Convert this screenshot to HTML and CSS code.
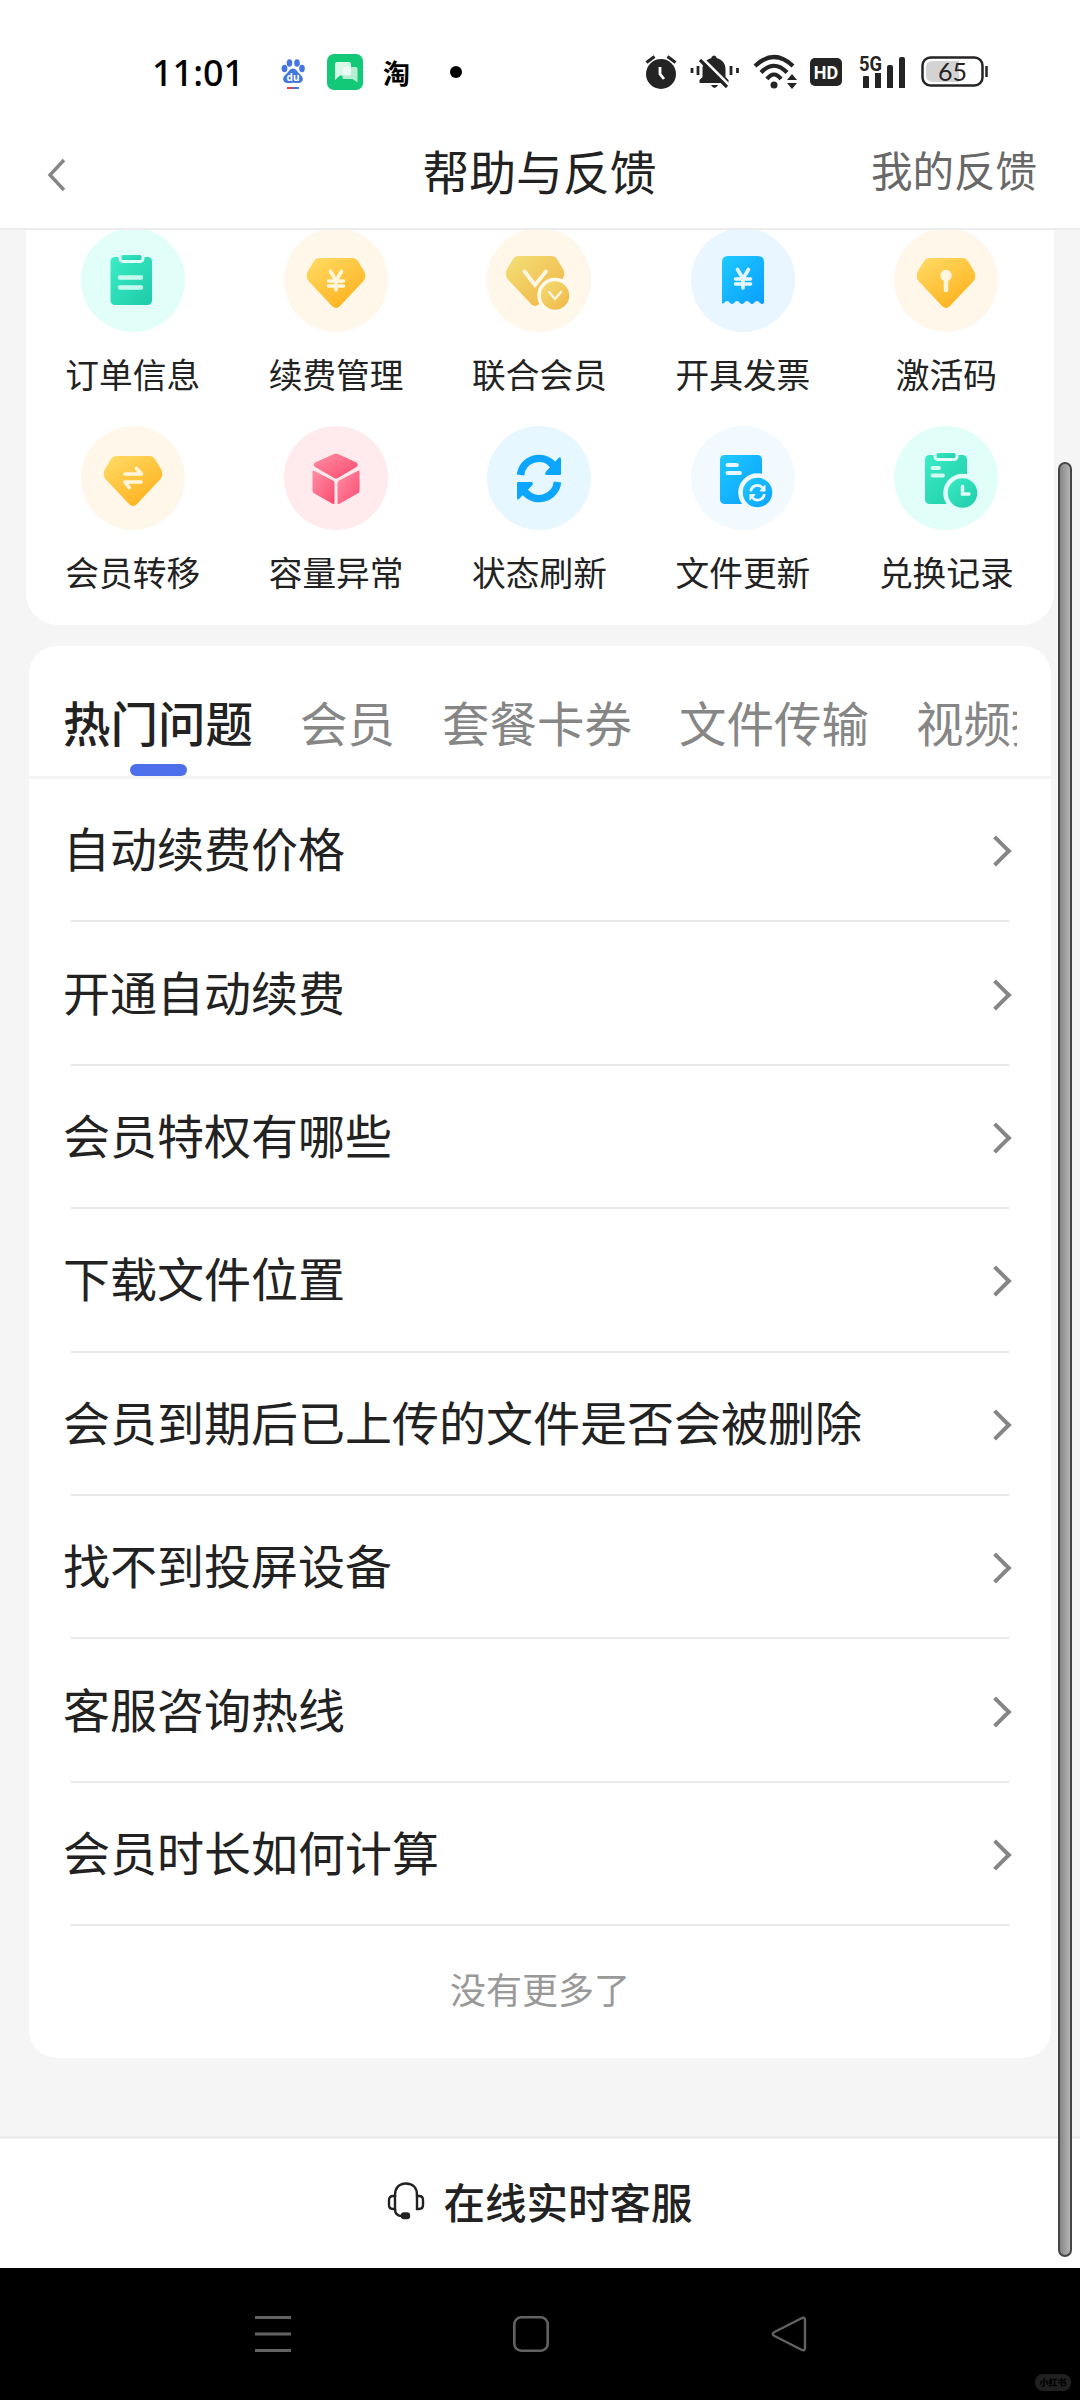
FILE: index.html
```html
<!DOCTYPE html>
<html lang="zh-CN">
<head>
<meta charset="utf-8">
<title>帮助与反馈</title>
<link rel="stylesheet" href="styles.css">
</head>
<body>
<svg class="defs" width="0" height="0" aria-hidden="true">
  <defs>
    <linearGradient id="gold" x1="0" y1="0" x2=".7" y2="1"><stop offset="0" stop-color="#ffdc66"/><stop offset="1" stop-color="#ffb21f"/></linearGradient>
    <linearGradient id="sand" x1="0" y1="0" x2=".9" y2="1"><stop offset="0" stop-color="#f2e078"/><stop offset="1" stop-color="#f2b544"/></linearGradient>
    <linearGradient id="green" x1="0" y1="0" x2="1" y2="1"><stop offset="0" stop-color="#3cedc6"/><stop offset="1" stop-color="#1dcaa8"/></linearGradient>
    <linearGradient id="blue" x1="0" y1="0" x2="1" y2="1"><stop offset="0" stop-color="#1fcaff"/><stop offset="1" stop-color="#0a9eff"/></linearGradient>
    <linearGradient id="pink" x1="0" y1="0" x2="1" y2="1"><stop offset="0" stop-color="#ff8fa5"/><stop offset="1" stop-color="#fb4a6e"/></linearGradient>
    <path id="gem" d="M35 30H69Q72 30 74 33L80.500 44Q82.500 49 79.500 53L56 78Q52 82 48 78L24.500 53Q21.500 49 23.500 44L30 33Q32 30 35 30Z"/>
    <path id="yen" d="M46.500 43.500L52 52.500L57.500 43.500M52 52.500V62M44.500 53H59.500M44.500 58H59.500" fill="none" stroke-width="3.600" stroke-linecap="round"/>
    <g id="refresh">
      <path d="M33.500 49A18.500 18.500 0 0 1 66 39M70.500 56A18.500 18.500 0 0 1 38 66" fill="none" stroke="currentColor" stroke-width="7.500"/>
      <path d="M74 33V48Q74 49 73 49H59Q57.500 48 58.500 46L72 31.500Q74 30.500 74 33ZM30 72V57Q30 56 31 56H45Q46.500 57 45.500 59L32 73Q30 74.500 30 72Z" fill="currentColor"/>
    </g>
  </defs>
</svg>

<div class="screen">
  <div class="status">
    <span class="time">11:01</span>
    <svg class="baidu" width="24" height="32" viewBox="0 0 24 32">
      <g fill="#4478e0"><ellipse cx="3.500" cy="9.500" rx="2.900" ry="3.700"/><ellipse cx="8.500" cy="4" rx="2.800" ry="3.800"/><ellipse cx="16" cy="4" rx="2.800" ry="3.800"/><ellipse cx="21" cy="9.500" rx="2.800" ry="3.700"/><path d="M12 9.500c3 0 4 3 6.500 5.200 3 2.600 4.500 5.300 2.500 7.800-2.500 2.600-5.500 1.200-9 1.200s-6.500 1.400-9-1.200c-2-2.500-.5-5.200 2.500-7.800 2.500-2.200 3.500-5.200 6.500-5.200z"/></g>
      <text x="12" y="22" text-anchor="middle" class="du">du</text>
      <path d="M6 29h6" stroke="#e0404c" stroke-width="2"/><path d="M12 29h6" stroke="#4478e0" stroke-width="2"/>
    </svg>
    <svg class="chat" width="36" height="36" viewBox="0 0 36 36"><rect width="36" height="36" rx="7" fill="#12c977"/><path d="M17 13h12q1.500 0 1.500 1.500v14l-5-3.500h-8.500q-1.500 0-1.500-1.500v-9q0-1.500 1.500-1.500z" fill="#b7edd2"/><path d="M10 8h12q2 0 2 2v9.500q0 2-2 2H13l-5 4.500V10q0-2 2-2z" fill="#f2fff8" fill-opacity=".88"/></svg>
    <span class="tao">淘</span>
    <i class="dot"></i>
    <svg class="alarm" width="32" height="36" viewBox="0 0 32 36"><g stroke="#242424" stroke-width="3"><path d="M1.500 8.500l8-6M30.500 8.500l-8-6"/></g><circle cx="16" cy="20" r="15" fill="#242424"/><path d="M15 13v7l4 5" fill="none" stroke="#fff" stroke-width="2.800"/></svg>
    <svg class="bell" width="50" height="36" viewBox="0 0 50 36"><path d="M9.500 29v-3l3-3V15c0-6 4-9.500 9-11V3q2.500-3 5 0v1c6 1.500 9 6 9 11v8l3 3v3z" fill="#242424"/><path d="M21 31h7q-3.500 6-7 0z" fill="#242424"/><path d="M13 5l27 27" stroke="#fff" stroke-width="3"/><path d="M10 6l27 27" stroke="#242424" stroke-width="3.200"/><path d="M2 14v5M8 12v9M41 12v9M47.500 14v5" stroke="#242424" stroke-width="2.800"/></svg>
    <svg class="wifi" width="46" height="36" viewBox="0 0 46 36"><g fill="none" stroke="#242424" stroke-width="4.200"><path d="M2 12Q21-6 40 12"/><path d="M8 18.500Q21 5 34 18.500"/><path d="M14 25Q21 16 28 25"/></g><circle cx="21" cy="31" r="3.500" fill="#242424"/><path d="M34 26l5-6 5 6zM34 29l5 6 5-6z" fill="#242424"/></svg>
    <span class="hd">HD</span>
    <svg class="signal" width="48" height="36" viewBox="0 0 48 36"><text x="0" y="17" textLength="23" lengthAdjust="spacingAndGlyphs" class="g5">5G</text><path d="M4 23q0-1 1-1h4q1 0 1 1v11h-6zM16 19h6v15h-6zM28 13q0-2 2-2h2q2 0 2 2v21h-6zM40 5q0-2 2-2h2q2 0 2 2v29h-6z" fill="#242424"/></svg>
    <svg class="battery" width="68" height="32" viewBox="0 0 68 32"><rect x="1.500" y="1.500" width="60" height="28" rx="8" fill="#fff" stroke="#242424" stroke-width="2.500"/><path d="M12 5h26v21H12q-7 0-7-7v-7q0-7 7-7z" fill="#d3d3d3"/><path d="M65.500 10v11" stroke="#242424" stroke-width="2.500"/><text x="31.500" y="24.500" text-anchor="middle" class="level">65</text></svg>
  </div>

  <header class="header">
    <svg class="back" width="20" height="34" viewBox="0 0 20 34"><path d="M17 2L3 17l14 15" fill="none" stroke="#858585" stroke-width="3.400"/></svg>
    <h1>帮助与反馈</h1>
    <span class="mine">我的反馈</span>
  </header>

  <main class="content">
    <section class="services">
      <div class="service"><svg viewBox="0 0 104 104"><circle cx="52" cy="52" r="52" fill="#e2fef8"/><rect x="29.500" y="29" width="41.500" height="48" rx="4.500" fill="url(#green)"/><rect x="39" y="25.500" width="23" height="8" rx="3" fill="url(#green)" stroke="#e2fef8" stroke-width="3"/><path d="M39 49.500H60M39 59.500H60" stroke="#c6faee" stroke-width="4.500" stroke-linecap="round"/></svg><span>订单信息</span></div>
      <div class="service"><svg viewBox="0 0 104 104"><circle cx="52" cy="52" r="52" fill="#fff8ea"/><use href="#gem" fill="url(#gold)"/><use href="#yen" stroke="#fff6dd"/></svg><span>续费管理</span></div>
      <div class="service"><svg viewBox="0 0 104 104"><circle cx="52" cy="52" r="52" fill="#fff7ea"/><use href="#gem" x="-4" y="-2" fill="url(#sand)"/><path d="M37.500 43.500L48 57L59 43.500" fill="none" stroke="#fff7e6" stroke-width="3.800" stroke-linecap="round"/><circle cx="68" cy="67.500" r="16" fill="url(#sand)" stroke="#fffaf0" stroke-width="3.500"/><path d="M62 64L68 71L74 64" fill="none" stroke="#fff7e6" stroke-width="2.300" stroke-linecap="round"/></svg><span>联合会员</span></div>
      <div class="service"><svg viewBox="0 0 104 104"><circle cx="52" cy="52" r="52" fill="#e9f6ff"/><path d="M37 28H67Q73 28 73 34V75Q71 77 69 75Q66 71 63 75Q61 77 59 75Q56 71 53 75Q51 77 49 75Q46 71 43 75Q41 77 39 75Q36 71 33 75Q32 76 31 75V34Q31 28 37 28Z" fill="url(#blue)"/><use href="#yen" y="-2" stroke="#e6f7ff"/></svg><span>开具发票</span></div>
      <div class="service"><svg viewBox="0 0 104 104"><circle cx="52" cy="52" r="52" fill="#fff8ea"/><use href="#gem" fill="url(#gold)"/><circle cx="52" cy="47.500" r="5.700" fill="#fff6dd"/><path d="M52 50V62" stroke="#fff6dd" stroke-width="4.500" stroke-linecap="round"/></svg><span>激活码</span></div>
      <div class="service"><svg viewBox="0 0 104 104"><circle cx="52" cy="52" r="52" fill="#fff8ea"/><use href="#gem" fill="url(#gold)"/><path d="M44 48H60.500L55.500 42.500M60 56H44L48 61.500" fill="none" stroke="#fff6dd" stroke-width="3.600" stroke-linecap="round" stroke-linejoin="round"/></svg><span>会员转移</span></div>
      <div class="service"><svg viewBox="0 0 104 104"><circle cx="52" cy="52" r="52" fill="#ffeaed"/><g fill="url(#pink)"><path d="M50 28Q52 26.800 54 28L72.500 36.500Q75 38.500 72.500 41L54 52Q52 53 50 52L31 41Q28.500 38.500 31 36.500Z"/><path d="M28.500 46Q28.500 44 30.500 45L49 54.500Q50.500 55.500 50.500 57V76.500Q50.500 79 48 77.500L30.500 67.500Q28.500 66.500 28.500 65Z"/><path d="M75.500 46Q75.500 44 73.500 45L55 54.500Q53.500 55.500 53.500 57V76.500Q53.500 79 56 77.500L73.500 67.500Q75.500 66.500 75.500 65Z"/></g></svg><span>容量异常</span></div>
      <div class="service"><svg viewBox="0 0 104 104" color="#0da6ff"><circle cx="52" cy="52" r="52" fill="#e7f7ff"/><use href="#refresh"/></svg><span>状态刷新</span></div>
      <div class="service"><svg viewBox="0 0 104 104"><circle cx="52" cy="52" r="52" fill="#f2faff"/><rect x="29" y="29" width="42" height="49" rx="4.500" fill="url(#blue)"/><path d="M36.500 39H46M36.500 47H49" stroke="#e9f9ff" stroke-width="3.800" stroke-linecap="round"/><circle cx="66.500" cy="66.500" r="17" fill="url(#blue)" stroke="#f2faff" stroke-width="4.500"/><g transform="translate(47.500 47.500) scale(.366)" color="#e9f9ff"><use href="#refresh"/></g></svg><span>文件更新</span></div>
      <div class="service"><svg viewBox="0 0 104 104"><circle cx="52" cy="52" r="52" fill="#e2fef8"/><rect x="31" y="29" width="42" height="49" rx="4.500" fill="url(#green)"/><rect x="41" y="25.500" width="22" height="8" rx="3" fill="url(#green)" stroke="#e2fef8" stroke-width="3"/><path d="M38.500 42H45M38.500 49.500H49" stroke="#d4fbf2" stroke-width="3.800" stroke-linecap="round"/><circle cx="68.500" cy="67" r="17" fill="url(#green)" stroke="#e2fef8" stroke-width="4.500"/><path d="M68.500 60.500V68H75" fill="none" stroke="#e2fef8" stroke-width="3.400" stroke-linecap="round"/></svg><span>兑换记录</span></div>
    </section>

    <section class="faq">
      <nav class="tabs"><div class="track"><span class="tab active">热门问题</span><span class="tab">会员</span><span class="tab">套餐卡券</span><span class="tab">文件传输</span><span class="tab">视频播放</span></div></nav>
      <ul class="list">
        <li>自动续费价格<i class="arrow"></i></li>
        <li>开通自动续费<i class="arrow"></i></li>
        <li>会员特权有哪些<i class="arrow"></i></li>
        <li>下载文件位置<i class="arrow"></i></li>
        <li>会员到期后已上传的文件是否会被删除<i class="arrow"></i></li>
        <li>找不到投屏设备<i class="arrow"></i></li>
        <li>客服咨询热线<i class="arrow"></i></li>
        <li>会员时长如何计算<i class="arrow"></i></li>
      </ul>
      <p class="end">没有更多了</p>
    </section>
  </main>

  <footer class="support">
    <svg width="38" height="38" viewBox="0 0 38 38" fill="none" stroke="#222" stroke-width="2.400"><path d="M8 15V13C8 6 12 1.500 19 1.500S30 6 30 13V15"/><path d="M8 14H6Q2 14 2 18V23Q2 27 6 27H8ZM30 14H32Q36 14 36 18V23Q36 27 32 27H30Z"/><path d="M8 27Q8 34 15 34"/><rect x="15" y="31.500" width="7" height="4.500" rx="2" fill="#222"/></svg>
    <span>在线实时客服</span>
  </footer>

  <div class="navbar">
    <svg width="36" height="36" viewBox="0 0 36 36"><path d="M0 1.500H36M0 18H36M0 34.500H36" stroke="#626262" stroke-width="2.800"/></svg>
    <svg width="36" height="36" viewBox="0 0 36 36"><rect x="1.300" y="1.300" width="33.400" height="33.400" rx="7" fill="none" stroke="#626262" stroke-width="2.600"/></svg>
    <svg width="36" height="36" viewBox="0 0 36 36"><path d="M30 2.500Q34 .5 34 4V32Q34 35.500 30 33.500L3.500 20Q0 18 3.500 16Z" fill="none" stroke="#626262" stroke-width="2.400"/></svg>
    <span class="mark">小红书</span>
  </div>
  <div class="scrollbar"></div>
</div>
</body>
</html>
```

FILE: styles.css
```css
* { box-sizing: border-box; margin: 0; padding: 0; }

body {
  width: 1080px;
  height: 2400px;
  overflow: hidden;
  font-family: "Noto Sans CJK SC", sans-serif;
  color: #222;
}

.defs { position: absolute; }

.screen {
  position: relative;
  display: flex;
  flex-direction: column;
  width: 1080px;
  height: 2400px;
  background: #f5f5f5;
}

/* Status bar */
.status {
  display: flex;
  align-items: center;
  flex: none;
  height: 145px;
  padding: 0 0 1px 152px;
  background: #fff;
}
.status svg { flex: none; overflow: visible; }
.time { width: 129px; padding-top: 2px; font: 500 36px/1 "Noto Sans", sans-serif; color: #000; }
.du { font: 700 10px "Noto Sans", sans-serif; fill: #fff; }
.status .baidu { margin-top: 5px; }
.chat { margin-left: 22px; }
.tao { width: 30px; margin-left: 20px; font-size: 27px; line-height: 1; font-weight: 700; color: #000; }
.dot { width: 12px; height: 12px; margin-left: 37px; border-radius: 50%; background: #000; }
.alarm { margin-left: 183px; }
.bell { margin-left: 13px; }
.wifi { margin-left: 13px; }
.hd {
  width: 32px;
  height: 28px;
  margin-left: 11px;
  border-radius: 5px;
  background: #242424;
  color: #fff;
  font: 700 18px/29px Roboto, sans-serif;
  text-align: center;
}
.signal { margin-left: 17px; }
.g5 { font: 700 20px Roboto, sans-serif; fill: #242424; }
.battery { margin-left: 14px; }
.level { font: 400 25px Lato, sans-serif; fill: #242424; }

/* Title bar */
.header {
  position: relative;
  z-index: 1;
  display: grid;
  grid-template-columns: 1fr auto 1fr;
  align-items: center;
  flex: none;
  height: 85px;
  padding: 0 43px 25px 47px;
  background: #fff;
  border-bottom: 2px solid #ececee;
}
.header h1 { margin: -8px 0 0 -5px; font-size: 46.800px; line-height: 60px; font-weight: 400; }
.back { margin-top: 1px; }
.mine { justify-self: end; margin-top: -11px; font-size: 41.500px; line-height: 60px; color: #686868; }

/* Shortcuts, scrolled partly under the title bar */
.content { flex: none; height: 1908px; margin-top: -2px; }
.services {
  display: grid;
  grid-template-columns: repeat(5, 1fr);
  grid-template-rows: 198px 198px;
  height: 397px;
  margin: 0 26px;
  padding: 0 6px 0 5px;
  background: #fff;
  border-radius: 0 0 32px 32px;
}
.service { display: flex; flex-direction: column; align-items: center; }
.service svg { width: 104px; height: 104px; }
.service span { margin-top: 17px; font-size: 33.700px; line-height: 50px; white-space: nowrap; }

/* Question card */
.faq {
  height: 1412px;
  margin: 21px 29px 0 29px;
  background: #fff;
  border-radius: 28px;
}
.tabs {
  height: 133px;
  padding: 0 34px;
  border-bottom: 3px solid #f4f4f4;
}
.track {
  display: flex;
  gap: 47px;
  height: 130px;
  overflow: hidden;
}
.tab { flex: none; padding-top: 41px; font-size: 47.500px; line-height: 70px; color: #868686; }
.tab.active { position: relative; color: #222; font-weight: 500; }
.tab.active::after {
  content: "";
  position: absolute;
  left: 67px;
  bottom: 0;
  width: 57px;
  height: 12px;
  border-radius: 6px;
  background: #4d6eea;
}
.list { list-style: none; }
.list li {
  display: flex;
  align-items: center;
  justify-content: space-between;
  height: 143.400px;
  padding: 0 44px 7px 34px;
  font-size: 47px;
  line-height: 70px;
  background: linear-gradient(#e9e9e9, #e9e9e9) 42px 100% / 938px 2px no-repeat;
}
.arrow {
  width: 22px;
  height: 22px;
  margin-top: 8px;
  border: solid #858585;
  border-width: 3.500px 3.500px 0 0;
  border-width: 4px 4px 0 0;
  transform: rotate(45deg);
}
.end { padding-top: 35px; text-align: center; font-size: 36px; line-height: 54px; color: #999; }

/* Live support */
.support {
  display: flex;
  align-items: center;
  justify-content: center;
  gap: 18px;
  flex: none;
  height: 132px;
  padding-bottom: 6px;
  background: #fff;
  border-top: 3px solid #ededed;
  font-size: 41.500px;
  font-weight: 500;
}

/* System navigation */
.navbar {
  position: relative;
  display: flex;
  align-items: center;
  gap: 222px;
  flex: 1;
  padding-left: 255px;
  background: #000;
}
.mark {
  position: absolute;
  right: 9px;
  bottom: 9px;
  width: 36px;
  height: 17px;
  border-radius: 8px;
  background: #202020;
  color: #000;
  font-size: 9px;
  line-height: 17px;
  font-weight: 900;
  text-align: center;
}
.scrollbar {
  position: absolute;
  z-index: 2;
  left: 1058px;
  top: 462px;
  width: 14px;
  height: 1795px;
  border: 2px solid #454545;
  border-radius: 7px;
  background: linear-gradient(90deg, #858585, #b5b5b5);
}
```
